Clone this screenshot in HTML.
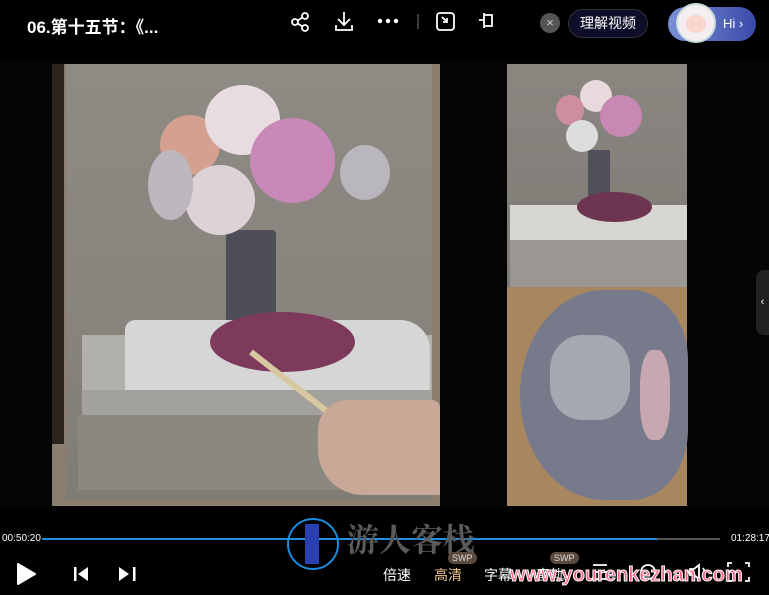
<!DOCTYPE html><html><head><meta charset="utf-8"><style>
*{margin:0;padding:0;box-sizing:border-box}
body{width:769px;height:595px;background:#000;overflow:hidden;position:relative;font-family:"Liberation Sans","Noto Sans CJK SC",sans-serif;color:#fff}
.a{position:absolute}
.r{border-radius:50%}
</style></head><body>
<div class="a" style="left:0;top:60px;width:769px;height:447px;background:#050505"></div>
<div class="a" style="left:27px;top:13px;font-size:17px;font-weight:bold">06.第十五节：《...</div>
<svg class="a" style="left:285px;top:8px" width="230" height="28" fill="none" stroke="#fff" stroke-width="1.8">
<circle cx="10" cy="14" r="3"/><circle cx="20" cy="8" r="3"/><circle cx="20" cy="20" r="3"/><path d="M12.6 12.5 17.5 9.5M12.6 15.5 17.5 18.5"/>
<path d="M59 4v13M53 11l6 6 6-6M51 17v5h16v-5"/>
<circle cx="95" cy="13" r="1.3" fill="#fff"/><circle cx="103" cy="13" r="1.3" fill="#fff"/><circle cx="111" cy="13" r="1.3" fill="#fff"/>
<path d="M133 6v15" stroke="#444"/>
<rect x="152" y="5" width="17" height="17" rx="3"/><path d="M157 9l5 5M162 10v4h-4"/>
<path d="M199 5v15M199 7h8v11h-8M194 12h5"/>
</svg>
<div class="a r" style="left:540px;top:13px;width:20px;height:20px;background:#555;font-size:13px;text-align:center;line-height:20px;color:#ccc">×</div>
<div class="a" style="left:568px;top:9px;width:80px;height:29px;border-radius:15px;background:#0e0e2a;border:1px solid #333;font-size:14px;text-align:center;line-height:27px">理解视频</div>
<div class="a" style="left:668px;top:7px;width:88px;height:34px;border-radius:17px;background:linear-gradient(90deg,#7a8fd8,#3a4aa8);font-size:13px;line-height:34px;padding-left:55px">Hi ›</div>
<div class="a r" style="left:676px;top:3px;width:40px;height:40px;background:#f4eef0;border:2px solid #cdd"></div>
<div class="a r" style="left:686px;top:15px;width:20px;height:18px;background:#f8d6cc"></div>
<!-- left painting -->
<div class="a" style="left:52px;top:64px;width:388px;height:442px;background:#8a7e6c"></div>
<div class="a" style="left:52px;top:64px;width:12px;height:380px;background:#2a241c"></div>
<div class="a" style="left:66px;top:64px;width:366px;height:436px;background:linear-gradient(#8e8a84,#88847d 60%,#7f7b75)"></div>
<div class="a" style="left:226px;top:230px;width:50px;height:110px;background:#4e4e56;border-radius:4px"></div>
<div class="a" style="left:82px;top:335px;width:350px;height:80px;background:#b2b0aa"></div>
<div class="a" style="left:125px;top:320px;width:305px;height:70px;background:#d6d6d6;border-radius:10px 30px 0 0"></div>
<div class="a" style="left:82px;top:390px;width:350px;height:25px;background:#a3a19c"></div>
<div class="a" style="left:78px;top:415px;width:354px;height:75px;background:#8b8882"></div>
<div class="a" style="left:210px;top:312px;width:145px;height:60px;background:#7d3a5c;border-radius:50%"></div>
<div class="a r" style="left:160px;top:115px;width:60px;height:60px;background:#d4a090"></div>
<div class="a r" style="left:205px;top:85px;width:75px;height:70px;background:#e8dce0"></div>
<div class="a r" style="left:250px;top:118px;width:85px;height:85px;background:#c888b8"></div>
<div class="a r" style="left:185px;top:165px;width:70px;height:70px;background:#ddd2d6"></div>
<div class="a r" style="left:148px;top:150px;width:45px;height:70px;background:#bdb8bd"></div>
<div class="a r" style="left:340px;top:145px;width:50px;height:55px;background:#b9b6bd"></div>
<div class="a" style="left:248px;top:352px;width:6px;height:185px;background:#d8c8a0;transform:rotate(-52deg);transform-origin:top"></div>
<div class="a" style="left:318px;top:400px;width:122px;height:95px;background:#c8a896;border-radius:30px 8px 0 45px"></div>
<!-- right top -->
<div class="a" style="left:507px;top:64px;width:180px;height:223px;background:linear-gradient(#8a8680,#7e7b76)"></div>
<div class="a" style="left:510px;top:205px;width:177px;height:35px;background:#d8d6d2"></div>
<div class="a" style="left:510px;top:240px;width:177px;height:47px;background:#9b9893"></div>
<div class="a" style="left:588px;top:150px;width:22px;height:55px;background:#50505a"></div>
<div class="a" style="left:577px;top:192px;width:75px;height:30px;background:#6e3550;border-radius:50%"></div>
<div class="a r" style="left:580px;top:80px;width:32px;height:32px;background:#e8dadc"></div>
<div class="a r" style="left:600px;top:95px;width:42px;height:42px;background:#c888b4"></div>
<div class="a r" style="left:556px;top:95px;width:28px;height:30px;background:#cf8ea0"></div>
<div class="a r" style="left:566px;top:120px;width:32px;height:32px;background:#ddd"></div>
<!-- palette -->
<div class="a" style="left:507px;top:287px;width:180px;height:219px;background:#a88660"></div>
<div class="a" style="left:520px;top:290px;width:168px;height:210px;background:#767a8a;border-radius:60% 40% 40% 60%"></div>
<div class="a" style="left:550px;top:335px;width:80px;height:85px;background:#a4a8b0;border-radius:40%"></div>
<div class="a" style="left:640px;top:350px;width:30px;height:90px;background:#c8a8b0;border-radius:40%"></div>
<!-- right tab -->
<div class="a" style="left:756px;top:270px;width:13px;height:65px;background:#222;border-radius:8px 0 0 8px;font-size:11px;line-height:65px;text-align:center">‹</div>
<!-- controls -->
<div class="a" style="left:2px;top:533px;font-size:10px">00:50:20</div>
<div class="a" style="left:731px;top:533px;font-size:10px">01:28:17</div>
<div class="a" style="left:42px;top:538px;width:615px;height:2px;background:#1e90e0"></div>
<div class="a" style="left:657px;top:538px;width:63px;height:2px;background:#555"></div>
<div class="a r" style="left:287px;top:518px;width:52px;height:52px;border:2px solid #1a8be0"></div>
<div class="a" style="left:305px;top:524px;width:14px;height:40px;background:#2a3fb0"></div>
<div class="a" style="left:347px;top:515px;font-size:32px;color:#5a5a5a;font-family:'Noto Serif CJK SC',serif;font-weight:bold">游人客栈</div>
<svg class="a" style="left:15px;top:562px" width="130" height="24" fill="#fff"><path d="M3 2l17 10-17 10z" stroke="#fff" stroke-linejoin="round" stroke-width="2"/><rect x="59" y="5" width="2.5" height="14"/><path d="M73 5v14l-10-7z"/><rect x="118" y="5" width="2.5" height="14"/><path d="M104 5v14l10-7z"/></svg>
<div class="a" style="left:383px;top:565px;font-size:14px">倍速</div>
<div class="a" style="left:434px;top:565px;font-size:14px;color:#f3c58a">高清</div>
<div class="a" style="left:484px;top:565px;font-size:14px">字幕</div>
<div class="a" style="left:536px;top:565px;font-size:14px">音轨</div>
<svg class="a" style="left:590px;top:560px" width="170" height="24" fill="none" stroke="#fff" stroke-width="1.8"><path d="M3 5h14M3 12h14M3 19h14"/><circle cx="58" cy="12" r="7"/><path d="M100 9h4l5-4v14l-5-4h-4zM113 8q3 4 0 8"/><path d="M142 3h-4v4M155 3h4v4M142 21h-4v-4M155 21h4v-4"/></svg>
<div class="a" style="left:510px;top:564px;font-size:20px;font-weight:bold;color:#ff5b7e;-webkit-text-stroke:1px #fff">www.yourenkezhan.com</div>
<div class="a" style="left:448px;top:552px;font-size:9px;background:#5a4a3e;border-radius:6px;padding:1px 4px;color:#ddd">SWP</div>
<div class="a" style="left:550px;top:552px;font-size:9px;background:#5a4a3e;border-radius:6px;padding:1px 4px;color:#ddd">SWP</div>
</body></html>
